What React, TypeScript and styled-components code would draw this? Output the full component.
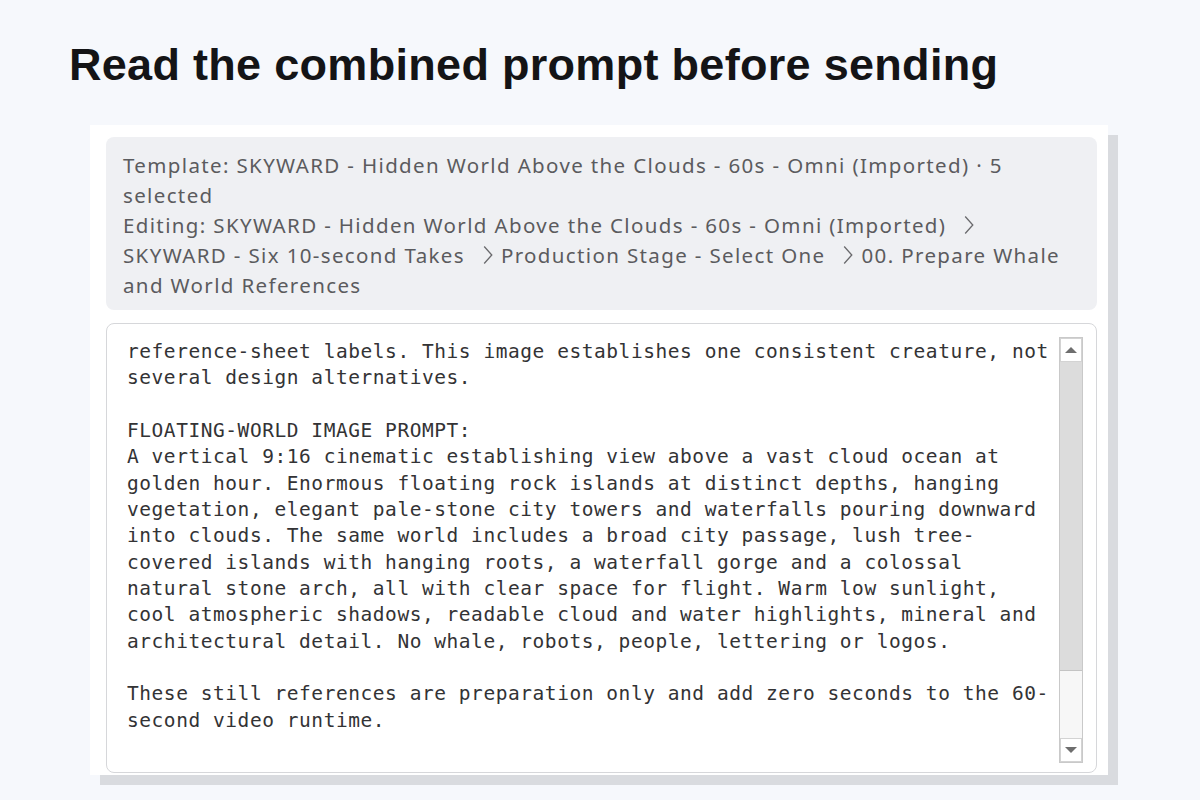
import React from "react";
import styled, { createGlobalStyle } from "styled-components";

const promptText = `reference-sheet labels. This image establishes one consistent creature, not
several design alternatives.

FLOATING-WORLD IMAGE PROMPT:
A vertical 9:16 cinematic establishing view above a vast cloud ocean at
golden hour. Enormous floating rock islands at distinct depths, hanging
vegetation, elegant pale-stone city towers and waterfalls pouring downward
into clouds. The same world includes a broad city passage, lush tree-
covered islands with hanging roots, a waterfall gorge and a colossal
natural stone arch, all with clear space for flight. Warm low sunlight,
cool atmospheric shadows, readable cloud and water highlights, mineral and
architectural detail. No whale, robots, people, lettering or logos.

These still references are preparation only and add zero seconds to the 60-
second video runtime.`;

function Sep() {
  return (
    <Chevron width="10" height="20" viewBox="0 0 10 20">
      <polyline points="1.2,1.5 8.8,10 1.2,18.5" />
    </Chevron>
  );
}

function App() {
  return (
    <>
      <GlobalStyle />
      <Page>
        <Heading>Read the combined prompt before sending</Heading>
        <Panel>
          <InfoBox>
            <InfoLine>
              Template: SKYWARD - Hidden World Above the Clouds - 60s - Omni (Imported) · 5
            </InfoLine>
            <InfoLine>selected</InfoLine>
            <InfoLine>
              Editing: SKYWARD - Hidden World Above the Clouds - 60s - Omni (Imported)
              <Sep />
            </InfoLine>
            <InfoLine>
              SKYWARD - Six 10-second Takes
              <Sep />
              Production Stage - Select One
              <Sep />
              00. Prepare Whale
            </InfoLine>
            <InfoLine>and World References</InfoLine>
          </InfoBox>
          <PromptField>
            <PromptText>{promptText}</PromptText>
            <Scrollbar>
              <ArrowButton>
                <Triangle $dir="up" />
              </ArrowButton>
              <Thumb />
              <Track />
              <ArrowButton>
                <Triangle $dir="down" />
              </ArrowButton>
            </Scrollbar>
          </PromptField>
        </Panel>
      </Page>
    </>
  );
}

export default App;

const GlobalStyle = createGlobalStyle`
  html, body {
    margin: 0;
    padding: 0;
    background: #f6f8fc;
  }
  body {
    font-family: "Liberation Sans", Arial, sans-serif;
  }
`;

const Page = styled.div`
  width: 1200px;
  height: 800px;
  overflow: hidden;
  padding: 35px 0 0 69px;
  box-sizing: border-box;
`;

const Heading = styled.h1`
  margin: 0;
  font-family: "Liberation Sans", Arial, sans-serif;
  font-weight: bold;
  font-size: 45px;
  line-height: 60px;
  color: #141416;
  letter-spacing: 0.3px;
`;

const Panel = styled.div`
  margin: 30px 0 0 21px;
  width: 1018px;
  height: 650px;
  box-sizing: border-box;
  background: #ffffff;
  padding: 12px 11px 2px 16px;
  display: flex;
  flex-direction: column;
  gap: 13px;
  box-shadow: 10px 10px 0 #d9dbdf;
`;

const InfoBox = styled.div`
  background: #eff0f3;
  border-radius: 8px;
  padding: 13px 17px 10px;
  color: #5b5b5e;
  font-family: "Noto Sans", "Open Sans", sans-serif;
  font-size: 20.5px;
  letter-spacing: 1.36px;
  line-height: 30px;
`;

const InfoLine = styled.div`
  white-space: nowrap;
  display: flex;
  align-items: center;
`;

const Chevron = styled.svg`
  flex: none;
  margin: 0 8px 0 18px;
  fill: none;
  stroke: #6a6a6d;
  stroke-width: 1.3;
`;

const PromptField = styled.div`
  flex: 1;
  display: flex;
  border: 1px solid #d6d7da;
  border-radius: 8px;
  padding: 13px 13px 9px 20px;
  min-height: 0;
`;

const PromptText = styled.pre`
  flex: 1;
  margin: 0;
  padding-top: 2px;
  font-family: "DejaVu Sans Mono", "Liberation Mono", monospace;
  font-size: 19.5px;
  letter-spacing: 0.55px;
  line-height: 26.35px;
  color: #333335;
  white-space: pre;
  overflow: hidden;
`;

const Scrollbar = styled.div`
  width: 24px;
  display: flex;
  flex-direction: column;
  border: 1px solid #c9c9c9;
  box-sizing: border-box;
  background: #f3f3f3;
`;

const ArrowButton = styled.div`
  height: 22px;
  flex: none;
  background: #ffffff;
  border: 1px solid #d3d3d3;
  display: flex;
  align-items: center;
  justify-content: center;
`;

const Triangle = styled.div<{ $dir: "up" | "down" }>`
  width: 0;
  height: 0;
  border-left: 6px solid transparent;
  border-right: 6px solid transparent;
  ${({ $dir }) =>
    $dir === "up"
      ? "border-bottom: 6px solid #6e6e6e;"
      : "border-top: 6px solid #6e6e6e;"}
`;

const Thumb = styled.div`
  height: 308px;
  flex: none;
  background: #dcdcdc;
  border-bottom: 1px solid #c4c4c4;
`;

const Track = styled.div`
  flex: 1;
  background: #f7f7f7;
`;
